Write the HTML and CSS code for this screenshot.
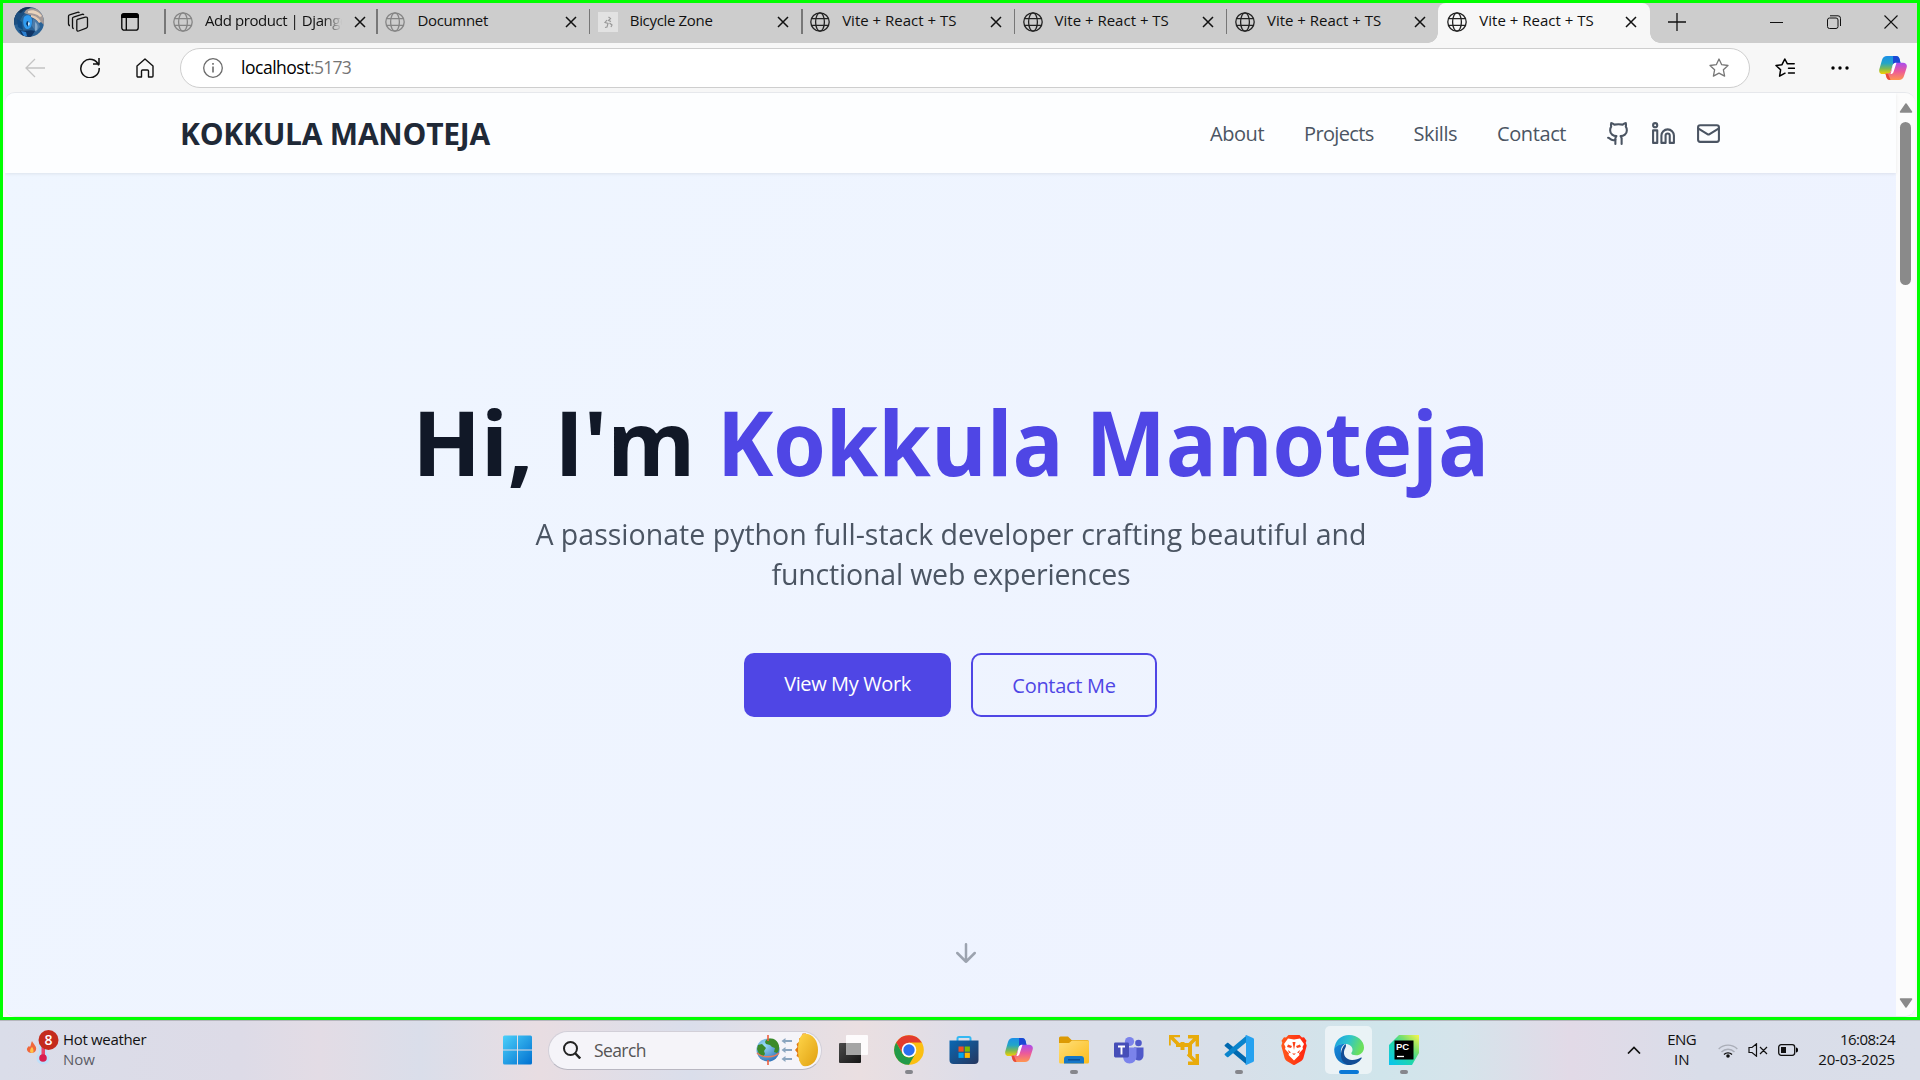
FILE: index.html
```html
<!DOCTYPE html>
<html lang="en">
<head>
<meta charset="utf-8">
<title>Vite + React + TS</title>
<link rel="stylesheet" href="styles.css">
</head>
<body>
<svg class="defs" width="0" height="0" aria-hidden="true">
  <defs>
    <linearGradient id="cp-a" x1="0" y1="0" x2="0" y2="1"><stop offset="0" stop-color="#1c8fe8"/><stop offset=".4" stop-color="#22a5c8"/><stop offset=".7" stop-color="#7cb955"/><stop offset="1" stop-color="#f5d000"/></linearGradient>
    <linearGradient id="cp-b" x1="0" y1="0" x2="0" y2="1"><stop offset="0" stop-color="#a84df0"/><stop offset=".5" stop-color="#ec5a9a"/><stop offset="1" stop-color="#ff9650"/></linearGradient>
    <linearGradient id="win" x1="0" y1="0" x2="1" y2="1"><stop offset="0" stop-color="#4cd0fa"/><stop offset="1" stop-color="#0070d0"/></linearGradient>
    <linearGradient id="store" x1="0" y1="0" x2="1" y2="1"><stop offset="0" stop-color="#0a68b4"/><stop offset="1" stop-color="#26365e"/></linearGradient>
    <linearGradient id="folder" x1="0" y1="0" x2="1" y2="1"><stop offset="0" stop-color="#ffdf7a"/><stop offset="1" stop-color="#fbbc1c"/></linearGradient>
    <linearGradient id="brave" x1="0" y1="0" x2="1" y2="0"><stop offset="0" stop-color="#ff5a1c"/><stop offset="1" stop-color="#ff2410"/></linearGradient>
    <linearGradient id="edge-top" x1="0" y1="0" x2="1" y2=".3"><stop offset="0" stop-color="#1a9be0"/><stop offset=".5" stop-color="#2cc3cf"/><stop offset="1" stop-color="#6be05c"/></linearGradient>
    <linearGradient id="edge-low" x1="0" y1="0" x2="1" y2="1"><stop offset="0" stop-color="#1489dd"/><stop offset="1" stop-color="#1262ad"/></linearGradient>
    <linearGradient id="py" x1="0" y1="1" x2="1" y2="0"><stop offset="0" stop-color="#07c3f2"/><stop offset=".45" stop-color="#21d7a9"/><stop offset=".7" stop-color="#7fe06a"/><stop offset="1" stop-color="#fcf84a"/></linearGradient>
    <linearGradient id="tv" x1="0" y1="0" x2="1" y2="1"><stop offset="0" stop-color="#4a4a4a"/><stop offset="1" stop-color="#161616"/></linearGradient>
    <linearGradient id="sun" x1="0" y1="0" x2="1" y2="1"><stop offset="0" stop-color="#ffd54a"/><stop offset="1" stop-color="#e0a010"/></linearGradient>
    <radialGradient id="earth" cx=".35" cy=".3" r=".8"><stop offset="0" stop-color="#9adcf8"/><stop offset="1" stop-color="#2d6fb8"/></radialGradient>
    <symbol id="globe" viewBox="0 0 20 20"><g fill="none" stroke="currentColor" stroke-width="1.3"><circle cx="10" cy="10" r="9.2"/><ellipse cx="10" cy="10" rx="4.4" ry="9.2"/><path d="M1.6 6.6h16.8M1.6 13.4h16.8"/></g></symbol>
    <symbol id="close" viewBox="0 0 12 12"><path d="M1 1l10 10M11 1L1 11" fill="none" stroke="currentColor" stroke-width="1.5"/></symbol>
    <symbol id="copilot" viewBox="0 0 28 26">
      <path d="M8 1h9c2 0 3 1 3.600 3L21.500 8H17c-2 0-3 1-3.600 3l-1.700 5.500C11 18.500 10 19 8.500 19H4c-3 0-4.500-2-3.600-5L3 5c.8-2.700 2.500-4 5-4z" fill="url(#cp-a)"/>
      <path d="M14 1h3c2 0 3 1 3.600 3L21.500 8H17c-1.500 0-2.300.5-3 1.500L14 6c0-2 .3-4 0-5z" fill="#1b48d4"/>
      <path d="M20 25h-9c-2 0-3-1-3.600-3L6.500 18.500h2.500c1.500 0 2.300-1 2.800-2.500L14 10.500C14.600 8.500 16 7.700 18 7.700h6c3 0 4.500 2 3.600 5L25 21c-.8 2.700-2.500 4-5 4z" fill="url(#cp-b)"/>
      <path d="M14 9.500c.7-1.300 1.800-1.800 3.500-1.800L14.500 17c-.5 1.500-1.400 2-3 2 1-2.500 1.400-6 2.500-9.500z" fill="#fff"/>
      <path d="M6.500 18.700H9L11.500 25H11c-2 0-3-1-3.600-3z" fill="#e8483a"/>
    </symbol>
  </defs>
</svg>

<div class="window">
  <div class="tabbar">
    <svg class="avatar" viewBox="0 0 30 30"><defs><clipPath id="av"><circle cx="15" cy="15" r="15"/></clipPath></defs><g clip-path="url(#av)"><rect width="30" height="30" fill="#2a6296"/><path d="M0 0h17L10 6 5 14 0 17z" fill="#14375c"/><path d="M0 4l7 2 3-3 4 1-6 5-3 8-5 1z" fill="#1d4f80"/><path d="M12 3C18-1 27 2 30 9v9l-6-6-8-4-6-2z" fill="#a39a98"/><path d="M14 4c6-2 11 1 14 5l-2 1c-3-3-7-4-12-4z" fill="#e9d3bd"/><path d="M17 8c5 1 8 3 10 7l-2 1c-2-3-5-5-8-6z" fill="#e2c9b4"/><path d="M19 12c4 1 6 4 7 8l-4 5-4-6z" fill="#4d7ba8"/><path d="M21 15c3 2 3 5 2 8l-2 1z" fill="#86a9c9"/><path d="M10 10c3-3 8-2 8 4s-2 8-5 8-5-7-3-12z" fill="#2f9bf0"/><path d="M13 14l2 1-1 5-2-3z" fill="#0d3566"/><path d="M3 12l5 3 1 8-5-3z" fill="#0f4a86"/><path d="M5 23c6 2 11-1 16 1l-4 6H9z" fill="#0f3566"/><path d="M14 15l2 1-1 3-1-1z" fill="#c7e8ff"/><path d="M7 24l5 1 1 4-3 0z" fill="#2b7fd0"/></g></svg>
    <svg class="workspaces" viewBox="0 0 22 22" fill="none" stroke="#111" stroke-width="1.300"><path d="M10.500 8.300l7.800-2.200c1.300-.3 2.200.4 2.200 1.500v8c0 .8-.4 1.300-1.200 1.600l-7.600 2.800c-1.200.4-1.900-.2-1.900-1.200V9.600c0-.7.200-1.100.7-1.300z"/><path d="M6.800 17.500c-.8 0-1.300-.5-1.300-1.300V7.500c0-.7.300-1.200 1-1.400L15 3.300c.8-.2 1.500 0 1.900.7"/><path d="M3 14.500c-.8 0-1.500-.5-1.500-1.400V5.300c0-.7.300-1.200 1-1.400l8-2.600c.8-.2 1.500 0 1.800.7"/></svg>
    <svg class="tabactions" viewBox="0 0 18 18"><rect x=".8" y=".8" width="16.400" height="16.400" rx="2.500" fill="none" stroke="#000" stroke-width="1.300"/><path d="M0 3a3 3 0 013-3h12a3 3 0 013 3v2H0z"/><path d="M5.300 5v12" stroke="#000" stroke-width="1.300"/></svg>
    <div class="tabs">
      <div class="tab"><svg class="fav dim"><use href="#globe"/></svg><span class="tt fade">Add product | Djang<span class="clip">o</span></span><svg class="x"><use href="#close"/></svg></div>
      <div class="tab"><svg class="fav dim"><use href="#globe"/></svg><span class="tt tight">Documnet</span><svg class="x"><use href="#close"/></svg></div>
      <div class="tab"><svg class="fav" viewBox="0 0 20 20"><rect width="20" height="20" fill="#e2e2e2"/><path d="M10.500 5l2 1.500-2 2 2.500 1M9 8l-2 2.500 3 1-1 3.500-2 .5M11.500 11l2.500 2-1 2" fill="none" stroke="#999" stroke-width="1.200"/></svg><span class="tt tight">Bicycle Zone</span><svg class="x"><use href="#close"/></svg></div>
      <div class="tab"><svg class="fav"><use href="#globe"/></svg><span class="tt">Vite + React + TS</span><svg class="x"><use href="#close"/></svg></div>
      <div class="tab"><svg class="fav"><use href="#globe"/></svg><span class="tt">Vite + React + TS</span><svg class="x"><use href="#close"/></svg></div>
      <div class="tab"><svg class="fav"><use href="#globe"/></svg><span class="tt">Vite + React + TS</span><svg class="x"><use href="#close"/></svg></div>
      <div class="tab active"><svg class="fav"><use href="#globe"/></svg><span class="tt">Vite + React + TS</span><svg class="x"><use href="#close"/></svg></div>
    </div>
    <svg class="newtab" viewBox="0 0 18 18"><path d="M9 0v18M0 9h18" stroke="#111" stroke-width="1.300"/></svg>
    <div class="wincontrols">
      <svg viewBox="0 0 14 14"><path d="M0 7.500h13" stroke="#111" stroke-width="1"/></svg>
      <svg viewBox="0 0 14 14" fill="none" stroke="#111" stroke-width="1"><rect x=".5" y="3" width="10.500" height="10.500" rx="2"/><path d="M3 .8h8a2.500 2.500 0 012.500 2.500V11"/></svg>
      <svg viewBox="0 0 14 14"><path d="M.5.500l13 13M13.500.5l-13 13" stroke="#111" stroke-width="1.100"/></svg>
    </div>
  </div>

  <div class="toolbar">
    <svg class="back" viewBox="0 0 20 20" fill="none" stroke="#c4c4c4" stroke-width="1.300"><path d="M20 10H1M10 1l-9 9 9 9"/></svg>
    <svg class="reload" viewBox="0 0 20 20" fill="none" stroke="#111" stroke-width="1.500"><path d="M18.700 7.500A9.200 9.200 0 1019.200 10M19 0v6h-6"/></svg>
    <svg class="home" viewBox="0 0 20 20" fill="none" stroke="#111" stroke-width="1.400" stroke-linejoin="round"><path d="M10 1l8 7v10a1 1 0 01-1 1h-3.500v-6a1 1 0 00-1-1h-5a1 1 0 00-1 1v6H3a1 1 0 01-1-1V8z"/></svg>
    <div class="urlbar">
      <svg class="info" viewBox="0 0 20 20"><circle cx="10" cy="10" r="9.300" fill="none" stroke="#6b6b6b" stroke-width="1.300"/><path d="M10 8.500v6M10 5v1.800" stroke="#6b6b6b" stroke-width="1.600"/></svg>
      <span class="url">localhost<span class="port">:5173</span></span>
      <svg class="star" viewBox="0 0 20 20" fill="none" stroke="#777" stroke-width="1.300" stroke-linejoin="round"><path d="M10 1l2.700 5.700 6.300.8-4.600 4.300 1.200 6.300L10 15.100l-5.600 3L5.600 11.800 1 7.500l6.300-.8z"/></svg>
    </div>
    <svg class="favs" viewBox="0 0 20 20" fill="none" stroke="#000" stroke-width="1.500" stroke-linejoin="round" stroke-linecap="round"><path d="M10 15.200l-5.400 3 1-6.400L1 7.500l6-.8L9.800 1l2.600 4.800h6.800M13.500 10.300h6M13.500 15h6"/></svg>
    <svg class="dots" viewBox="0 0 18 4"><circle cx="2" cy="2" r="1.700"/><circle cx="9" cy="2" r="1.700"/><circle cx="16" cy="2" r="1.700"/></svg>
    <svg class="cop"><use href="#copilot"/></svg>
  </div>

  <div class="viewport">
    <div class="page">
      <header class="nav">
        <span class="brand">KOKKULA MANOTEJA</span>
        <nav class="links">
          <a class="l-about">About</a><a class="l-projects">Projects</a><a class="l-skills">Skills</a><a class="l-contact">Contact</a>
          <div class="social">
            <svg viewBox="0 0 24 24"><path d="M15 22v-4a4.800 4.800 0 0 0-1-3.500c3 0 6-2 6-5.500.08-1.250-.27-2.480-1-3.500.28-1.150.28-2.350 0-3.500 0 0-1 0-3 1.500-2.640-.5-5.360-.5-8 0C6 2 5 2 5 2c-.3 1.150-.3 2.350 0 3.500A5.403 5.403 0 0 0 4 9c0 3.500 3 5.500 6 5.500-.39.490-.68 1.050-.85 1.650-.17.600-.22 1.230-.15 1.850v4"/><path d="M9 18c-4.510 2-5-2-7-2"/></svg>
            <svg viewBox="0 0 24 24"><path d="M16 8a6 6 0 0 1 6 6v7h-4v-7a2 2 0 0 0-2-2 2 2 0 0 0-2 2v7h-4v-7a6 6 0 0 1 6-6z"/><rect width="4" height="12" x="2" y="9"/><circle cx="4" cy="4" r="2"/></svg>
            <svg viewBox="0 0 24 24"><rect width="20" height="16" x="2" y="4" rx="2"/><path d="m22 7-8.970 5.700a1.940 1.940 0 0 1-2.060 0L2 7"/></svg>
          </div>
        </nav>
      </header>
      <main class="hero">
        <h1><span class="hi">Hi, I'm</span> <span class="name">Kokkula Manoteja</span></h1>
        <p>A passionate python full-stack developer crafting beautiful and<br><span class="second">functional web experiences</span></p>
        <div class="cta"><a class="btn solid">View My Work</a><a class="btn outline">Contact Me</a></div>
        <svg class="down" viewBox="0 0 24 24"><path d="M12 5v14M19 12l-7 7-7-7"/></svg>
      </main>
    </div>
    <div class="scrollbar">
      <svg viewBox="0 0 14 10"><path d="M7 1l5.500 8h-11z"/></svg>
      <div class="thumb"></div>
      <svg class="sdown" viewBox="0 0 14 10"><path d="M7 9l5.500-8h-11z"/></svg>
    </div>
  </div>
</div>

<div class="taskbar">
  <div class="weather">
    <svg viewBox="0 0 34 38"><path d="M6 12c1 3 5 5 4 9-1 4-8 4-9 0-.5-2 1-3 2-4l1 1c1-2 1-4 2-6z" fill="#f0673a"/><path d="M6 18c2 2 2 6 0 6s-3-3 0-6z" fill="#ffc24a"/><path d="M13 12h8v12a6.500 6.500 0 11-8 0z" fill="#bfe0fa"/><path d="M15.500 12h3.500v15h-3.500z" fill="#e8446a"/><circle cx="17" cy="29" r="3.800" fill="#d81e50"/><circle cx="22.500" cy="11" r="10" fill="#c42b1c"/><text x="22.500" y="16.200" text-anchor="middle" class="badge">8</text></svg>
    <div class="wt"><span class="tight">Hot weather</span><span class="muted">Now</span></div>
  </div>
  <div class="apps">
    <div class="app"><svg class="i30" viewBox="0 0 30 30"><path d="M0 2a1.500 1.500 0 011.500-1.500h12.500v14H0zM15 .5h12.500A1.500 1.500 0 0129 2v12.500H15zM0 15.500h14v14H1.500A1.500 1.500 0 010 28zM15 15.500h14V28a1.500 1.500 0 01-1.500 1.500H15z" fill="url(#win)"/></svg></div>
    <div class="search">
      <svg class="mag" viewBox="0 0 18 18"><circle cx="7.500" cy="7.500" r="6.500" fill="none" stroke="#222" stroke-width="2"/><path d="M12.200 12.200l5 5.300" stroke="#222" stroke-width="2.400"/></svg>
      <span class="st">Search</span>
      <svg class="equinox" viewBox="0 0 64 34"><circle cx="12" cy="17" r="11.500" fill="url(#earth)"/><path d="M10 7c5-3 10-1 12 3 2 4 1 8-1 10l-3-1 1-4-3-1-2-2-4-1-1-2zM2 12l4-1 4 4-2 3 1 3-2 3-4-3-2-5z" fill="#3b8a2a"/><path d="M1 20c5 5 17 5 22 0" fill="none" stroke="#e87c5c" stroke-width="1.500"/><path d="M12 2v6M12 27v5" stroke="#ee5f40" stroke-width="1.600"/><path d="M36 8h-8M36 17h-8M36 26h-8" stroke="#8ba5bf" stroke-width="2"/><path d="M25.500 8l4-3v6zM25.500 17l4-3v6zM25.500 26l4-3v6z" fill="#8ba5bf"/><path d="M50 .5h-3.500l-.5 3.500-3 1.500.5 3-3 2.500 1 3-2.500 3 2.500 3-1 3 3 2 0 3 3 1 .5 3.500H50z" fill="#e07a10"/><path d="M49 .7c8 0 13 7 13 16.300s-5 16.300-13 16.300c-5 0-7-8-7-16.300S44 .7 49 .7z" fill="url(#sun)"/></svg>
    </div>
    <div class="app"><svg class="i30" viewBox="0 0 30 30"><rect x="0" y="8" width="22" height="20" rx="1" fill="url(#tv)"/><rect x="7" y="0" width="22" height="20" rx="1" fill="#fff" fill-opacity=".88"/><rect x="7" y="8" width="15" height="12" fill="#a5a5a5"/></svg></div>
    <div class="app run"><svg class="i30" viewBox="0 0 30 30"><circle cx="15" cy="15" r="14.800" fill="#fbbf12"/><path d="M2.180 7.600A14.800 14.800 0 0127.820 7.600L15 7.600 8.600 18.700z" fill="#e33b2e"/><path d="M2.180 7.600L8.600 18.700a7.400 7.400 0 0012.800 0L15 29.800A14.800 14.800 0 012.180 7.600z" fill="#229a49"/><circle cx="15" cy="15" r="7.300" fill="#fff"/><circle cx="15" cy="15" r="5.700" fill="#2b6ff0"/></svg></div>
    <div class="app"><svg class="i30" viewBox="0 0 30 30"><path d="M8.500 7V3.500A1.500 1.500 0 0110 2h10a1.500 1.500 0 011.500 1.500V7" fill="none" stroke="#35b8f2" stroke-width="2"/><path d="M.5 5.500h29V25a4 4 0 01-4 4h-21a4 4 0 01-4-4z" fill="url(#store)"/><path fill="#f25022" d="M9.500 11.500h5.200v5.200H9.500z"/><path fill="#7fba00" d="M15.700 11.500h5.200v5.200h-5.200z"/><path fill="#00a4ef" d="M9.500 17.700h5.200v5.200H9.500z"/><path fill="#ffb900" d="M15.700 17.700h5.200v5.200h-5.200z"/></svg></div>
    <div class="app"><svg class="i28"><use href="#copilot"/></svg></div>
    <div class="app run"><svg class="i30" viewBox="0 0 30 30"><path d="M0 3a1.500 1.500 0 011.500-1.500H9L12.500 5H28a2 2 0 012 2v4H0z" fill="#dc9a05"/><path d="M0 8h10l3-2.500h15.500A1.500 1.500 0 0130 7v20a1.500 1.500 0 01-1.500 1.500h-27A1.500 1.500 0 010 27z" fill="url(#folder)"/><path d="M5 28.500V24a3 3 0 013-3h14a3 3 0 013 3v4.500z" fill="#1577c8"/><path d="M9 24.800h12" stroke="#0a4d92" stroke-width="1.400"/></svg></div>
    <div class="app"><svg class="i30" viewBox="0 0 30 30"><circle cx="24.500" cy="8" r="3.300" fill="#5059c9"/><circle cx="15.500" cy="6.500" r="4.600" fill="#7b83eb"/><path d="M20 12.500h9.500V20c0 3.500-2 5.500-5 5.500-2 0-3.500-1-4.500-2.500z" fill="#5059c9"/><path d="M9 12.500h13.500V21c0 4.500-3 7.500-7 7.500S9 25.500 9 21z" fill="#7b83eb"/><rect x="0" y="7.500" width="15" height="15" rx="1.400" fill="#464eb8"/><path d="M4 11.500h7M7.500 11.500v8" stroke="#fff" stroke-width="1.900"/></svg></div>
    <div class="app"><svg class="i30" viewBox="0 0 30 30" fill="none" stroke="#e8ab0c"><path d="M0 10.500V.5h11M1 1l9 9" stroke-width="3.500"/><path d="M19 1.800h9.300v9.700M28 2l-9 9" stroke-width="3.500"/><path d="M28.300 19v9.300H19M28 28l-9-9" stroke-width="3.500"/><path d="M7 10h14v12M13.500 7v8" stroke-width="4"/></svg></div>
    <div class="app run"><svg class="i30" viewBox="0 0 30 30"><path d="M1 9.800l2-1.800c.4-.3 1-.3 1.400 0L22 22.500V29L.9 11.200c-.5-.4-.4-1 .1-1.400z" fill="#0069b0"/><path d="M1 20.200l2 1.800c.4.300 1 .3 1.400 0L22 7.500V1L.9 18.800c-.5.400-.4 1 .1 1.400z" fill="#0a84cc"/><path d="M21 .3c.3-.3.800-.4 1.200-.2l6.800 3c.6.300 1 .8 1 1.500v20.800c0 .7-.4 1.200-1 1.500l-6.800 3c-.4.200-.9.100-1.200-.2.500.3 1 0 1-.6V.9c0-.6-.5-.9-1-.6z" fill="#26a2f0"/></svg></div>
    <div class="app"><svg class="i30" viewBox="0 0 30 30"><path d="M9.500 0h11l2.500 2.500 2-.3 2.500 3.500-.8 2 1 3-3.200 12c-.4 1.500-1 2.300-2.200 3.200L15 30.300l-7.300-4.400C6.500 25 6 24.200 5.500 22.700L2.300 10.700l1-3-.8-2L5 2.200l2 .3z" fill="url(#brave)"/><path d="M15 4.500l6-1 4 5.500-1.500 3 .5 2-4 4.500.5 1.500L15 25.500 9.500 20l.5-1.500L6 14l.5-2L5 9l4-5.500z" fill="#fff"/><path d="M9 9.500l4 1.500-1 2-4-1zM21 9.500L17 11l1 2 4-1zM13 18.500h4L15 20zM13.500 7h3l-1.500 8zM9 15l3 2.500-2 .5zM21 15l-3 2.500 2 .5z" fill="#fb421a"/></svg></div>
    <div class="app run current"><svg class="i30" viewBox="0 0 30 30"><path d="M.3 14C1 5.500 7 0 15 0c8.500 0 15 6 15 12.500 0 4.500-3.500 7.800-8 7.800-3 0-4.700-1-4.700-2 0-.8 1.200-1.300 1.200-3.600 0-3-3-5.700-7-5.700C6 9 1.500 11 .3 14z" fill="url(#edge-top)"/><path d="M.2 14C1.500 10.500 6.500 8.800 11 9c-3 1.500-4.500 5-4 9 .6 5.500 5 9 10.500 10-1 1.500-2 2-3.500 2C6 29.500 0 23 .2 14z" fill="url(#edge-low)"/><path d="M10.500 14.500C8.500 20 12 24.800 18 25c3.500.1 6.500-1 9-2.500.5-.3 1 .2.700.7C25 27.500 20.500 30 15 30 9 29 6.500 24 7 18.500c.2-3.500 1.700-7 4.500-9.500 1 1 .5 3-1 5.500z" fill="#124d96"/></svg></div>
    <div class="app run"><svg class="i30" viewBox="0 0 30 30"><path d="M0 10L10 0h20v18l-7 12H0z" fill="url(#py)"/><rect x="5.500" y="5.500" width="19" height="19" fill="#000"/><text x="7" y="15" class="pc">PC</text><path d="M8 21.500h7" stroke="#fff" stroke-width="1.300"/></svg></div>
  </div>
  <div class="tray">
    <svg class="chev" viewBox="0 0 14 8"><path d="M1 7.500l6-6 6 6" fill="none" stroke="#111" stroke-width="1.700"/></svg>
    <div class="lang"><span class="eng">ENG</span><span>IN</span></div>
    <svg class="wifi" viewBox="0 0 20 15" fill="none" stroke-width="1.400"><path d="M.7 6a13 13 0 0118.600 0" stroke="#aaaeb8"/><path d="M3.500 9a9 9 0 0113 0" stroke="#aaaeb8"/><path d="M6 11.500a5.700 5.700 0 018 0" stroke="#111"/><circle cx="10" cy="13" r="1.800" fill="#111"/></svg>
    <svg class="vol" viewBox="0 0 20 14" fill="none" stroke="#111" stroke-width="1.200"><path d="M1 4.500h3L8.500.8v12.400L4 9.500H1zM12 4l7 7M19 4l-7 7"/></svg>
    <svg class="bat" viewBox="0 0 20 12"><rect x=".7" y=".7" width="16" height="10.600" rx="2.500" fill="none" stroke="#111" stroke-width="1.300"/><rect x="3" y="3" width="5" height="6" fill="#111"/><path d="M18 3.500c1.500 0 2 1 2 2.500s-.5 2.500-2 2.500z"/></svg>
    <div class="clock"><span class="time">16:08:24</span><span class="date">20-03-2025</span></div>
  </div>
</div>
</body>
</html>
```
FILE: styles.css
```css
* { box-sizing: border-box; }
body { margin: 0; width: 1920px; height: 1080px; overflow: hidden; font-family: "Open Sans", "Noto Sans", sans-serif; font-size: 15px; color: #111; display: flex; flex-direction: column; }
svg { display: block; flex: none; }
.defs { position: absolute; }
.tight { letter-spacing: -.33px; }
.window { height: 1020px; border: 3px solid #00ff00; background: #f7f7f7; display: flex; flex-direction: column; }

/* Tab strip */
.tabbar { height: 40px; background: #cdcdcd; display: flex; align-items: center; padding: 0 19px 2px 11px; }
.avatar { width: 30px; height: 30px; margin-top: -1px; }
.workspaces { width: 22px; height: 22px; margin-left: 23px; }
.tabactions { width: 18px; height: 18px; margin: 0 25px 0 32px; }
.tabs { display: flex; height: 40px; margin-bottom: -2px; }
.tab { width: 212.400px; height: 40px; display: flex; align-items: center; padding: 0 12px 2px 9px; position: relative; }
.tab::before { content: ""; position: absolute; left: 0; top: 6px; width: 1.500px; height: 25px; background: #777; }
.tab.active { background: #f7f7f7; border-radius: 8px 8px 0 0; width: 212px; padding-right: 13px; }
.tab.active::before { left: -10px; top: auto; bottom: 0; width: 10px; height: 10px; background: radial-gradient(circle at 0 0, #cdcdcd 9.500px, #f7f7f7 10px); }
.tab.active::after { content: ""; position: absolute; right: -10px; bottom: 0; width: 10px; height: 10px; background: radial-gradient(circle at 100% 0, #cdcdcd 9.500px, #f7f7f7 10px); }
.fav { width: 20px; height: 20px; color: #222; }
.dim { color: #858585; }
.tt { flex: 1; margin: -5px 12px 0; white-space: nowrap; line-height: 22px; }
.fade { letter-spacing: -.44px; display: flex; -webkit-mask-image: linear-gradient(90deg, #000 118px, transparent 137px); mask-image: linear-gradient(90deg, #000 118px, transparent 137px); }
.clip { width: 2px; overflow: hidden; }
.x { width: 12px; height: 12px; }
.newtab { width: 18px; height: 18px; margin-left: 18px; }
.wincontrols { display: flex; gap: 43px; margin-left: auto; }
.wincontrols svg { width: 14px; height: 14px; }

/* Address bar */
.toolbar { height: 49px; display: flex; align-items: center; padding: 1px 10px 0 22px; }
.back { width: 20px; height: 20px; }
.reload { width: 20px; height: 20px; margin-left: 35px; }
.home { width: 20px; height: 20px; margin-left: 35px; }
.urlbar { width: 1570px; height: 40px; margin-left: 25px; border: 1px solid #cecece; border-radius: 20px; background: #fff; display: flex; align-items: center; padding: 0 20px 0 22px; }
.info { width: 20px; height: 20px; }
.url { margin: -2px 0 0 18px; font-size: 17.500px; line-height: 24px; color: #000; letter-spacing: -.48px; }
.port { color: #757575; letter-spacing: -.7px; }
.star { width: 20px; height: 20px; margin-left: auto; }
.favs { width: 20px; height: 20px; margin-left: 25px; }
.dots { width: 18px; height: 4px; margin-left: 36px; }
.cop { width: 28px; height: 26px; margin-left: 30px; }

/* Page */
.viewport { height: 925px; margin: 0 2px; border: 1px solid #e6e8ec; border-width: 1px 0 1px; border-radius: 10px; overflow: hidden; display: flex; }
.page { flex: 1; display: flex; flex-direction: column; background: linear-gradient(135deg, #eff6ff, #eef2ff); }
.nav { height: 80px; background: #fdfeff; box-shadow: 0 1px 3px rgba(0, 0, 0, .08); display: flex; align-items: center; justify-content: space-between; padding: 0 175px; z-index: 1; }
.brand { font-size: 30px; font-weight: 700; color: #1f2937; white-space: nowrap; line-height: 40px; letter-spacing: -.24px; margin-top: 2px; }
.links { display: flex; align-items: center; gap: 40px; font-size: 20px; color: #4b5563; line-height: 30px; }
.links a { margin-top: 2px; white-space: nowrap; }
.l-about { width: 54px; letter-spacing: -.45px; }
.l-projects { width: 69.500px; letter-spacing: -.65px; }
.l-skills { width: 43.500px; letter-spacing: -.4px; }
.l-contact { width: 69px; letter-spacing: -.4px; }
.social { display: flex; gap: 20px; }
.social svg { width: 25px; height: 25px; fill: none; stroke: #4b5563; stroke-width: 2; stroke-linecap: round; stroke-linejoin: round; }
.hero { flex: 1; display: flex; flex-direction: column; align-items: center; padding-top: 223px; }
.hero h1 { margin: 0; font-size: 90px; line-height: 90px; font-weight: 700; color: #111827; white-space: nowrap; word-spacing: -1.500px; }
.hi { letter-spacing: -.5px; }
.name { display: inline-block; width: 772px; color: #4f46e5; transform: scaleX(.942); transform-origin: 0 50%; word-spacing: 0; }
.hero p { margin: 28px 0 59px; font-size: 30px; line-height: 40px; color: #4b5563; text-align: center; white-space: nowrap; transform: scaleX(.951); }
.second { letter-spacing: -.2px; }
.cta { display: flex; gap: 20px; }
.btn { height: 64px; border-radius: 10px; font-size: 20px; line-height: 30px; text-align: center; white-space: nowrap; letter-spacing: -.3px; }
.solid { width: 207px; background: #4f46e5; color: #fff; font-weight: 500; padding-top: 16px; letter-spacing: -.38px; }
.outline { width: 186px; border: 2px solid #4f46e5; color: #4f46e5; padding-top: 16px; }
.down { width: 30px; height: 30px; margin: 221px 0 0 31px; fill: none; stroke: #9ca3af; stroke-width: 2; stroke-linecap: round; stroke-linejoin: round; }
.scrollbar { width: 19px; background: #fcfcfc; display: flex; flex-direction: column; align-items: center; padding: 10px 0 8px; }
.scrollbar svg { width: 14px; height: 10px; fill: #8a8a8a; stroke: #8a8a8a; stroke-width: 1.500; stroke-linejoin: round; }
.thumb { width: 11px; height: 163px; margin-top: 9px; border-radius: 6px; background: #8a8a8a; }
.scrollbar .sdown { margin-top: auto; }

/* Taskbar */
.taskbar { height: 60px; border-top: 1px solid #b5b6bd; padding-bottom: 1px; display: flex; align-items: center; background: linear-gradient(90deg, #dadde9 0, #dddbe7 240px, #e3dce5 320px, #dadeea 420px, #e8dde2 540px, #dadeeb 690px, #eadfe1 860px, #dcdde9 980px, #d8dfe9 1220px, #d0e5eb 1380px, #d5e4eb 1460px, #e2dae7 1570px, #d9dde9 1700px, #dadee9 1920px); }
.weather { width: 494px; display: flex; align-items: center; padding-left: 26px; }
.weather svg { width: 34px; height: 38px; margin-top: -4px; }
.badge { font: 600 14px "Open Sans", sans-serif; fill: #fff; }
.wt, .lang, .clock { display: flex; flex-direction: column; line-height: 20px; margin-top: -3px; white-space: nowrap; }
.wt { margin-left: 3px; align-items: flex-start; }
.muted { color: #5c5d66; }
.apps { display: flex; gap: 8px; align-items: center; }
.app { width: 47px; height: 48px; border-radius: 5px; display: flex; align-items: center; justify-content: center; position: relative; }
.i30 { width: 30px; height: 30px; }
.i28 { width: 28px; height: 26px; }
.run::after { content: ""; position: absolute; left: 20px; bottom: 0; width: 8px; height: 4px; border-radius: 2px; background: #85868c; }
.current { background: rgba(255, 255, 255, .55); }
.current::after { left: 14px; width: 20px; background: #0b78d6; }
.search { width: 274px; height: 39px; margin-left: -1px; border-radius: 20px; border: 1px solid #d2cfd8; border-bottom-color: #b9b7c2; background: #f5f4f9; display: flex; align-items: center; padding-left: 14px; }
.mag { width: 18px; height: 18px; }
.st { width: 52px; margin-left: 13px; font-size: 17.500px; line-height: 24px; color: #555; letter-spacing: -.6px; }
.equinox { width: 64px; height: 34px; margin-left: 110px; }
.pc { font: 700 9.500px "Liberation Sans", sans-serif; fill: #fff; }
.tray { margin-left: auto; display: flex; align-items: center; padding-right: 25px; }
.chev { width: 14px; height: 8px; margin-right: 26px; }
.lang { align-items: center; margin-right: 22px; }
.eng { letter-spacing: -.5px; }
.wifi { width: 20px; height: 15px; margin-right: 10px; }
.vol { width: 20px; height: 14px; margin-right: 10px; }
.bat { width: 20px; height: 12px; margin-right: 20px; }
.clock { align-items: flex-end; }
.time { letter-spacing: -.54px; }
.date { letter-spacing: -.15px; }
```
